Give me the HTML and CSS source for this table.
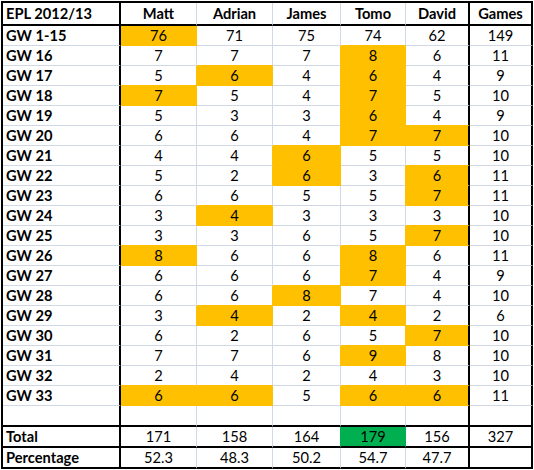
FILE: index.html
```html
<!DOCTYPE html>
<html>
<head>
<meta charset="utf-8">
<title>EPL 2012/13</title>
<link rel="stylesheet" href="styles.css">
</head>
<body>
<div class="sheet">
  <div class="c lb h">EPL 2012/13</div><div class="c h">Matt</div><div class="c h">Adrian</div><div class="c h">James</div><div class="c h">Tomo</div><div class="c h d">David</div><div class="c h gm">Games</div>

  <div class="c lb">GW 1-15</div><div class="c y">76</div><div class="c">71</div><div class="c">75</div><div class="c yb">74</div><div class="c d">62</div><div class="c gm">149</div>
  <div class="c lb">GW 16</div><div class="c">7</div><div class="c yb">7</div><div class="c yr">7</div><div class="c y">8</div><div class="c d">6</div><div class="c gm">11</div>
  <div class="c lb">GW 17</div><div class="c yr yb">5</div><div class="c y">6</div><div class="c yr">4</div><div class="c y">6</div><div class="c d">4</div><div class="c gm">9</div>
  <div class="c lb">GW 18</div><div class="c y">7</div><div class="c">5</div><div class="c yr">4</div><div class="c y">7</div><div class="c d">5</div><div class="c gm">10</div>
  <div class="c lb">GW 19</div><div class="c">5</div><div class="c">3</div><div class="c yr">3</div><div class="c y">6</div><div class="c d yb">4</div><div class="c gm">9</div>
  <div class="c lb">GW 20</div><div class="c">6</div><div class="c">6</div><div class="c yr yb">4</div><div class="c y">7</div><div class="c d y">7</div><div class="c gm">10</div>
  <div class="c lb">GW 21</div><div class="c">4</div><div class="c yr">4</div><div class="c y">6</div><div class="c">5</div><div class="c d yb">5</div><div class="c gm">10</div>
  <div class="c lb">GW 22</div><div class="c">5</div><div class="c yr">2</div><div class="c y">6</div><div class="c yr">3</div><div class="c d y">6</div><div class="c gm">11</div>
  <div class="c lb">GW 23</div><div class="c">6</div><div class="c yb">6</div><div class="c">5</div><div class="c yr">5</div><div class="c d y">7</div><div class="c gm">11</div>
  <div class="c lb">GW 24</div><div class="c yr">3</div><div class="c y">4</div><div class="c">3</div><div class="c">3</div><div class="c d yb">3</div><div class="c gm">10</div>
  <div class="c lb">GW 25</div><div class="c yb">3</div><div class="c">3</div><div class="c">6</div><div class="c yr yb">5</div><div class="c d y">7</div><div class="c gm">10</div>
  <div class="c lb">GW 26</div><div class="c y">8</div><div class="c">6</div><div class="c yr">6</div><div class="c y">8</div><div class="c d">6</div><div class="c gm">11</div>
  <div class="c lb">GW 27</div><div class="c">6</div><div class="c">6</div><div class="c yr yb">6</div><div class="c y">7</div><div class="c d">4</div><div class="c gm">9</div>
  <div class="c lb">GW 28</div><div class="c">6</div><div class="c yr yb">6</div><div class="c y">8</div><div class="c yb">7</div><div class="c d">4</div><div class="c gm">10</div>
  <div class="c lb">GW 29</div><div class="c yr">3</div><div class="c y">4</div><div class="c yr">2</div><div class="c y">4</div><div class="c d yb">2</div><div class="c gm">6</div>
  <div class="c lb">GW 30</div><div class="c">6</div><div class="c">2</div><div class="c">6</div><div class="c yr yb">5</div><div class="c d y">7</div><div class="c gm">10</div>
  <div class="c lb">GW 31</div><div class="c">7</div><div class="c">7</div><div class="c yr">6</div><div class="c y">9</div><div class="c d">8</div><div class="c gm">10</div>
  <div class="c lb">GW 32</div><div class="c yb">2</div><div class="c yb">4</div><div class="c">2</div><div class="c yb">4</div><div class="c d yb">3</div><div class="c gm">10</div>
  <div class="c lb">GW 33</div><div class="c y">6</div><div class="c y">6</div><div class="c yr">5</div><div class="c y">6</div><div class="c d y">6</div><div class="c gm">11</div>

  <div class="c lb b"></div><div class="c b"></div><div class="c b"></div><div class="c b"></div><div class="c b"></div><div class="c d b"></div><div class="c gm b"></div>

  <div class="c lb t">Total</div><div class="c t">171</div><div class="c t">158</div><div class="c t gr">164</div><div class="c t g">179</div><div class="c d t">156</div><div class="c gm t">327</div>
  <div class="c lb t">Percentage</div><div class="c t">52.3</div><div class="c t">48.3</div><div class="c t">50.2</div><div class="c t">54.7</div><div class="c d t">47.7</div><div class="c gm t"></div>
</div>
</body>
</html>
```

FILE: styles.css
```css
html, body {
  margin: 0;
  padding: 0;
  background: #ffffff;
}

body {
  padding: 1px 0 0 1px;
}

.sheet {
  display: grid;
  grid-template-columns: 118px 76px 76px 68px 65px 64px 63px;
  grid-template-rows: 23px repeat(19, 20px) repeat(3, 21px);
  width: max-content;
  border-left: 2px solid #000;
  border-top: 2px solid #000;
  font-family: Lato, "Open Sans", sans-serif;
  font-size: 14.67px;
  color: #000;
}

.c {
  box-sizing: border-box;
  border-right: 1px solid #d0d7e5;
  border-bottom: 1px solid #d0d7e5;
  text-align: center;
  line-height: 19px;
  white-space: nowrap;
  overflow: hidden;
}

.yr { border-right-color: #ffc000; }
.yb { border-bottom-color: #ffc000; }
.y {
  background: #ffc000;
  border-right-color: #ffc000;
  border-bottom-color: #ffc000;
}
.g {
  background: #00b050;
  border-right-color: #00b050;
}
.gr { border-right-color: #00b050; }

.lb {
  text-align: left;
  padding-left: 3px;
  font-weight: 700;
  border-right: 2px solid #000;
}
.d, .gm { border-right: 2px solid #000; }

.h {
  font-weight: 700;
  line-height: 21px;
  border-bottom: 2px solid #000;
}
.b, .t { border-bottom: 2px solid #000; }
```
